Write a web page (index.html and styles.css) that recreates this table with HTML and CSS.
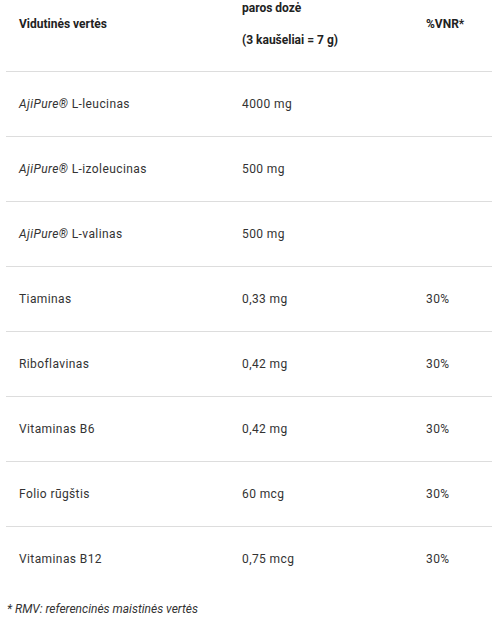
FILE: index.html
```html
<!DOCTYPE html>
<html lang="lt">
<head>
<meta charset="utf-8">
<link rel="stylesheet" href="styles.css">
</head>
<body>
<div class="wrap">
  <table class="nutri">
    <colgroup>
      <col class="c1"><col class="c2"><col class="c3">
    </colgroup>
    <thead>
      <tr>
        <th><p>Vidutinės vertės</p></th>
        <th><p>paros dozė</p><p>(3 kaušeliai = 7 g)</p></th>
        <th><p>%VNR*</p></th>
      </tr>
    </thead>
    <tbody>
      <tr><td><em>AjiPure®</em> L-leucinas</td><td>4000 mg</td><td></td></tr>
      <tr><td><em>AjiPure®</em> L-izoleucinas</td><td>500 mg</td><td></td></tr>
      <tr><td><em>AjiPure®</em> L-valinas</td><td>500 mg</td><td></td></tr>
      <tr><td>Tiaminas</td><td>0,33 mg</td><td>30%</td></tr>
      <tr><td>Riboflavinas</td><td>0,42 mg</td><td>30%</td></tr>
      <tr><td>Vitaminas B6</td><td>0,42 mg</td><td>30%</td></tr>
      <tr><td>Folio rūgštis</td><td>60 mcg</td><td>30%</td></tr>
      <tr><td>Vitaminas B12</td><td>0,75 mcg</td><td>30%</td></tr>
    </tbody>
  </table>
  <p class="note">* RMV: referencinės maistinės vertės</p>
</div>
</body>
</html>
```
FILE: styles.css
```css
html, body {
  margin: 0;
  padding: 0;
  background: #fff;
}
body {
  font-family: Roboto, "Liberation Sans", sans-serif;
  font-size: 12px;
  color: #333;
}
.wrap {
  padding: 0 2px 0 6px;
}
.nutri {
  width: 486px;
  border-collapse: collapse;
  table-layout: fixed;
}
.c1 { width: 223px; }
.c2 { width: 184px; }
.c3 { width: 79px; }
.nutri th {
  text-align: left;
  font-weight: 700;
  color: #222;
  vertical-align: middle;
  padding: 0 13px 23px;
  border-bottom: 1px solid #ddd;
  line-height: 16px;
}
.nutri th p {
  margin: 0;
}
.nutri th p + p {
  margin-top: 16px;
}
.nutri td {
  height: 64px;
  padding: 0 13px;
  vertical-align: middle;
  line-height: 16px;
  letter-spacing: 0.4px;
  border-bottom: 1px solid #ddd;
}
.nutri tbody tr:last-child td {
  border-bottom: none;
}
.note {
  margin: 10px 0 0 1px;
  font-style: italic;
  line-height: 16px;
}
```
